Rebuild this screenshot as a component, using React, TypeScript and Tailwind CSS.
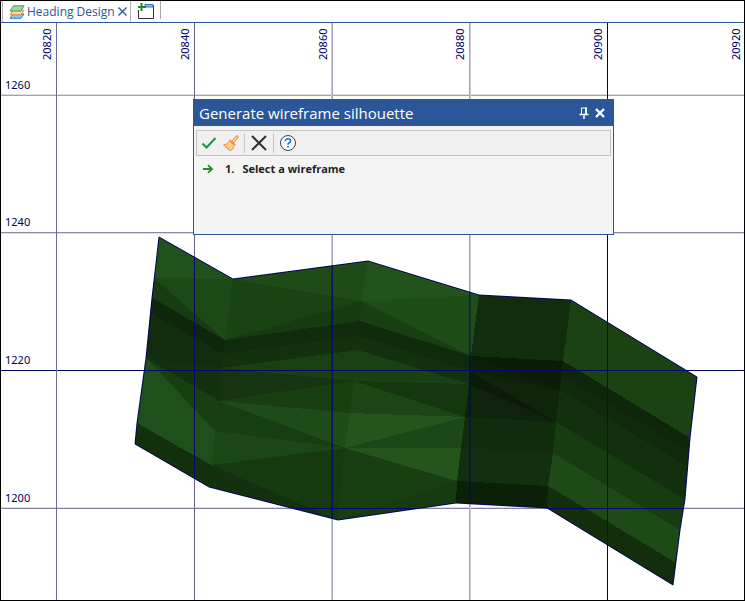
import React, { useState } from 'react';

interface GridLine {
    pos: number;
    label: string;
    color: string;
    // second, lighter pixel row of a line that falls between two pixels
    softPos?: number;
    softColor?: string;
}

interface Face {
    points: string;
    fill: string;
}

const eastings: GridLine[] = [
    { pos: 56, label: '20820', color: '#6a6a9c' },
    { pos: 194, label: '20840', color: '#62628e' },
    { pos: 332, label: '20860', color: '#a5a1b8', softPos: 331, softColor: '#cfcdd8' },
    { pos: 469, label: '20880', color: '#a5a1b8', softPos: 470, softColor: '#cfcdd8' },
    { pos: 607, label: '20900', color: '#00005e' },
    { pos: 745, label: '20920', color: '#6a6a9c' },
];

const northings: GridLine[] = [
    { pos: 95, label: '1260', color: '#a6a1b8', softPos: 94, softColor: '#dedce4' },
    { pos: 232, label: '1240', color: '#8c88a8', softPos: 233, softColor: '#dedce4' },
    { pos: 370, label: '1220', color: '#00005e' },
    { pos: 508, label: '1200', color: '#857fa5', softPos: 507, softColor: '#dedce4' },
];

const outline = '159,237 233,279 368,261 479,295 571,300 697,377 690,438 685,499 680,530 673,585 547,508 456,503 338,520 209,487 135,444 137,423 146,358 152,298';

const faces: Face[] = [
    // first bay
    { points: '159,237 233,279 154,278', fill: '#21511c' },
    { points: '154,278 233,279 225,340', fill: '#1c4a17' },
    { points: '154,278 225,340 152,298', fill: '#173c11' },
    { points: '152,298 225,340 223,354 150,313', fill: '#0e260b' },
    { points: '150,313 223,354 222,368 146,358', fill: '#122d0e' },
    { points: '146,358 222,368 219,401', fill: '#13310e' },
    { points: '146,358 219,401 215,431', fill: '#173f12' },
    { points: '146,358 215,431 211,465 137,423', fill: '#1f4f1a' },
    { points: '137,423 211,465 209,487 135,444', fill: '#12300e' },
    // second bay
    { points: '233,279 368,261 362,301', fill: '#1e4b17' },
    { points: '233,279 362,301 225,340', fill: '#194313' },
    { points: '225,340 362,301 360,321', fill: '#173b11' },
    { points: '225,340 360,321 359,336 223,354', fill: '#112b0d' },
    { points: '223,354 359,336 358,350 222,368', fill: '#14310e' },
    { points: '222,368 358,350 354,381', fill: '#194013' },
    { points: '222,368 354,381 219,401', fill: '#15340f' },
    { points: '219,401 354,381 350,413', fill: '#183f12' },
    { points: '219,401 350,413 345,448', fill: '#1e4c18' },
    { points: '219,401 345,448 215,431', fill: '#173d12' },
    { points: '215,431 345,448 211,465', fill: '#1b4616' },
    { points: '211,465 345,448 338,520', fill: '#163a10' },
    { points: '211,465 338,520 209,487', fill: '#13310e' },
    // third bay
    { points: '368,261 479,295 362,301', fill: '#23531c' },
    { points: '362,301 479,295 471,356', fill: '#1f4d17' },
    { points: '362,301 471,356 360,321', fill: '#183f12' },
    { points: '360,321 471,356 470,371 359,336', fill: '#102a0c' },
    { points: '359,336 470,371 469,384 358,350', fill: '#13310e' },
    { points: '358,350 469,384 354,381', fill: '#194214' },
    { points: '354,381 469,384 465,417', fill: '#15370f' },
    { points: '354,381 465,417 350,413', fill: '#1b4515' },
    { points: '350,413 465,417 345,448', fill: '#25551d' },
    { points: '345,448 465,417 461,448', fill: '#1b4816' },
    { points: '345,448 461,448 457,481', fill: '#25551d' },
    { points: '345,448 457,481 338,520', fill: '#183f12' },
    { points: '338,520 457,481 456,503', fill: '#163b10' },
    // fourth bay
    { points: '479,295 571,300 563,361 471,356', fill: '#112d0d' },
    { points: '471,356 563,361 560,390', fill: '#0a1b08' },
    { points: '471,356 560,390 470,371', fill: '#0b1f09' },
    { points: '470,371 560,390 556,422', fill: '#0e250b' },
    { points: '470,371 556,422 469,384', fill: '#0a1c08' },
    { points: '469,384 556,422 465,417', fill: '#0d230b' },
    { points: '465,417 556,422 553,453 461,448', fill: '#112b0d' },
    { points: '461,448 553,453 548,486 457,481', fill: '#12300f' },
    { points: '457,481 548,486 547,508 456,503', fill: '#0b1f09' },
    // last bay
    { points: '571,300 697,377 690,438 563,361', fill: '#1a4213' },
    { points: '563,361 690,438 688,451 561,375', fill: '#0e240b' },
    { points: '561,375 688,451 688,467 560,390', fill: '#10290d' },
    { points: '560,390 688,467 684,499 556,422', fill: '#12300e' },
    { points: '556,422 684,499 680,530 553,453', fill: '#173c12' },
    { points: '553,453 680,530 675,562 548,486', fill: '#1d4a17' },
    { points: '548,486 675,562 673,585 547,508', fill: '#122e0d' },
];

function LayersIcon() {
    return (
        <svg width="16" height="14" viewBox="0 0 16 14" aria-hidden="true">
            <path d="M4 9H15L12 13.300H1Z" fill="#8fc0ee" stroke="#2d6fbd" strokeWidth="0.900" />
            <path d="M4 5.200H15L12 9.800H1Z" fill="#fbd59a" stroke="#e08a35" strokeWidth="0.900" />
            <path d="M4.500 0.800H15L12 6H1Z" fill="#9fd8a4" stroke="#3c9550" strokeWidth="0.900" />
        </svg>
    );
}

function NewTabIcon() {
    return (
        <svg width="17" height="17" viewBox="0 0 17 17" aria-hidden="true">
            <path d="M1.500 7V15.500H16.500V2" fill="none" stroke="#333" />
            <path d="M8 1.500H16V4H8Z" fill="#8fbcf0" stroke="#3a78c0" />
            <path d="M4.500 0V8M1 4H9" stroke="#258a2c" strokeWidth="2" />
        </svg>
    );
}

function BroomIcon() {
    return (
        <svg width="18" height="18" viewBox="0 0 18 18" aria-hidden="true">
            <path d="M15 3L10.500 8" stroke="#ed8a3f" strokeWidth="3.200" strokeLinecap="round" />
            <path d="M15 3L10.500 8" stroke="#ffd899" strokeWidth="1.400" strokeLinecap="round" />
            <path d="M7.500 7L12 11.500L10.500 15.500L7.500 16.500L1.500 11Q5.500 10.500 7.500 7Z" fill="#ffd899" stroke="#ed8a3f" strokeLinejoin="round" />
            <path d="M8 6L13 11" stroke="#ed8a3f" strokeWidth="1.400" strokeLinecap="round" />
            <path d="M4 13L6 11.500M6.500 15L8 13" stroke="#ed8a3f" strokeWidth="0.700" strokeLinecap="round" />
        </svg>
    );
}

function Plot() {
    return (
        <svg className="absolute inset-0 h-full w-full" role="img" aria-label="Wireframe plan view">
            <defs>
                <clipPath id="mesh">
                    <polygon points={outline} />
                </clipPath>
            </defs>
            <g transform="translate(-1 -23)">
                <g shapeRendering="crispEdges">
                    {northings.map((line) => (
                        <g key={line.label}>
                            <rect x="0" y={line.pos} width="101%" height="1" fill={line.color} />
                            {line.softPos && <rect x="0" y={line.softPos} width="101%" height="1" fill={line.softColor} />}
                        </g>
                    ))}
                    {eastings.map((line) => (
                        <g key={line.label}>
                            <rect x={line.pos} y="23" width="1" height="100%" fill={line.color} />
                            {line.softPos && <rect x={line.softPos} y="23" width="1" height="100%" fill={line.softColor} />}
                        </g>
                    ))}
                </g>
                <g clipPath="url(#mesh)" shapeRendering="crispEdges">
                    <polygon points={outline} fill="#12300e" />
                    {faces.map((face) => (
                        <polygon key={face.points} points={face.points} fill={face.fill} />
                    ))}
                    {northings.map((line) => (
                        <rect key={line.label} x="0" y={line.pos} width="101%" height="1" fill="#03086a" />
                    ))}
                    {eastings.map((line) => (
                        <g key={line.label}>
                            <rect x={line.pos} y="23" width="1" height="100%" fill="#03086a" fillOpacity={line.softPos ? 0.8 : 1} />
                            {line.softPos && <rect x={line.softPos} y="23" width="1" height="100%" fill="#03086a" fillOpacity="0.4" />}
                        </g>
                    ))}
                </g>
                <polygon points={outline} fill="none" stroke="#00005e" />
                <g fontFamily='"Noto Sans", sans-serif' fontSize="11" fill="#00005e">
                    {northings.map((line) => (
                        <text key={line.label} x="5" y={line.pos - 6}>{line.label}</text>
                    ))}
                    {eastings.map((line) => (
                        <text key={line.label} transform={`translate(${line.pos - 5} 60) rotate(-90)`}>{line.label}</text>
                    ))}
                </g>
            </g>
        </svg>
    );
}

function SilhouetteDialog({ onClose }: { onClose: () => void }) {
    return (
        <section
            role="dialog"
            aria-label="Generate wireframe silhouette"
            className="absolute left-[192px] top-[76px] flex h-[136px] w-[421px] flex-col border border-[#2b579a] bg-[#f4f4f4]"
        >
            <header className="flex h-[26px] shrink-0 items-center bg-[#2b579a] pl-[5px] pr-2 text-white">
                <h1 className="flex-1 text-[15px] leading-5">Generate wireframe silhouette</h1>
                <button type="button" aria-label="Pin" className="mr-1.5">
                    <svg width="10" height="12" viewBox="0 0 10 12" fill="none" stroke="#fff">
                        <path d="M2.500 7V1H7V7" />
                        <path d="M7 0.500V7" strokeWidth="2" />
                        <path d="M0.500 7.500H9.500" strokeWidth="1.500" />
                        <path d="M5 7V12" strokeWidth="1.500" />
                    </svg>
                </button>
                <button type="button" aria-label="Close" onClick={onClose}>
                    <svg width="10" height="10" viewBox="0 0 10 10">
                        <path d="M1 1L9 9M9 1L1 9" stroke="#fff" strokeWidth="2.400" />
                    </svg>
                </button>
            </header>
            <div className="mx-0.5 mt-1 flex h-[26px] shrink-0 items-center border border-[#c4c4c4] bg-[#f0f0f0] pl-1">
                <button type="button" aria-label="Accept" className="mr-[5px]">
                    <svg width="16" height="14" viewBox="0 0 16 14">
                        <path d="M1.500 7.500L5.500 11.500L14.500 2" fill="none" stroke="#2d8c46" strokeWidth="2" />
                    </svg>
                </button>
                <button type="button" aria-label="Clear">
                    <BroomIcon />
                </button>
                <span className="ml-1 mr-1.5 h-5 w-px bg-[#c8c8c8]" />
                <button type="button" aria-label="Cancel">
                    <svg width="16" height="16" viewBox="0 0 16 16">
                        <path d="M1 1L15 15M15 1L1 15" stroke="#333" strokeWidth="2" />
                    </svg>
                </button>
                <span className="mx-1.5 h-5 w-px bg-[#c8c8c8]" />
                <button type="button" aria-label="Help">
                    <svg width="16" height="16" viewBox="0 0 16 16" fill="none">
                        <circle cx="8" cy="8" r="7.500" fill="#fafafa" stroke="#444" />
                        <path d="M5.500 6Q5.500 3.800 8 3.800Q10.500 3.800 10.500 5.900Q10.500 7.200 9 8Q8 8.600 8 9.800" stroke="#1e73be" strokeWidth="1.500" />
                        <path d="M8 11V12.600" stroke="#1e73be" strokeWidth="1.600" />
                    </svg>
                </button>
            </div>
            <ol className="mt-[5px] pl-2 text-[11px] font-bold leading-4 text-[#222]">
                <li className="flex items-center">
                    <svg width="12" height="10" viewBox="0 0 12 10" className="mr-[11px]" aria-hidden="true">
                        <path d="M1 5H9.500M6 1.200L10 5L6 8.800" fill="none" stroke="#258a2c" strokeWidth="1.800" />
                    </svg>
                    <span className="mr-2">1.</span>
                    <span>Select a wireframe</span>
                </li>
            </ol>
        </section>
    );
}

export default function App() {
    const [showDialog, setShowDialog] = useState<boolean>(true);

    return (
        <div className="flex min-h-screen flex-col border border-black bg-white font-['Open_Sans',sans-serif]">
            <nav className="flex h-[22px] shrink-0 border-b border-[#2b579a] pl-px">
                <div className="flex items-center border-x border-[#b4b4b4] pl-1.5 pr-[3px] text-[#2b579a]">
                    <LayersIcon />
                    <button type="button" className="ml-0.5 text-[12px] leading-4">Heading Design</button>
                    <button type="button" aria-label="Close tab" className="ml-[3px]">
                        <svg width="9" height="9" viewBox="0 0 9 9">
                            <path d="M0.500 0.500L8.500 8.500M8.500 0.500L0.500 8.500" stroke="#2b579a" strokeWidth="1.400" />
                        </svg>
                    </button>
                </div>
                <button type="button" aria-label="New tab" className="h-[18px] border-r border-[#a8a8a8] pl-1.5 pr-1.5 pt-0.5">
                    <NewTabIcon />
                </button>
            </nav>
            <main className="relative flex-1 overflow-hidden">
                <Plot />
                {showDialog && <SilhouetteDialog onClose={() => setShowDialog(false)} />}
            </main>
        </div>
    );
}
